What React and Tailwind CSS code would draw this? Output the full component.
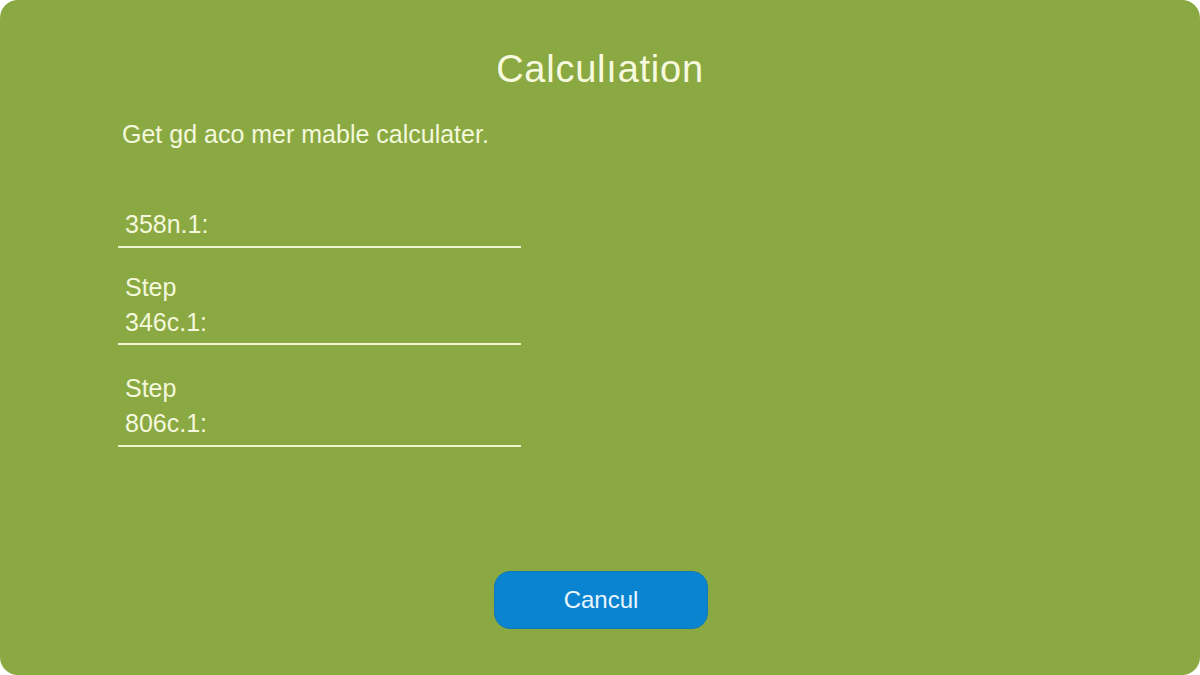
import React from 'react';

const Field = ({ lines, className = '' }) => (
  <div className={`w-[403px] border-b-2 border-[#eef5d0] ${className}`}>
    {lines.map((t, i) => (
      <p key={i} className="text-[25px] leading-[35px] text-[#f4f8dc] pl-[7px]">
        {t}
      </p>
    ))}
  </div>
);

const App = () => {
  return (
    <div className="w-[1200px] h-[675px] bg-white" style={{ fontFamily: '"Liberation Sans", Arial, sans-serif' }}>
      <div className="w-full h-full bg-[#8aa942] rounded-[18px] flex flex-col px-[118px]">
        <h1 className="pt-[47px] text-center text-[38px] leading-[44px] text-[#f7fadf] tracking-[0.02em]">
          Calculıation
        </h1>

        <p className="mt-[28px] pl-[4px] text-[25px] leading-[30px] text-[#f4f8dc]">
          Get gd aco mer mable calculater.
        </p>

        <Field lines={['358n.1:']} className="mt-[58px] pb-[4px]" />
        <Field lines={['Step', '346c.1:']} className="mt-[22px] pb-[3px]" />
        <Field lines={['Step', '806c.1:']} className="mt-[26px] pb-[4px]" />

        <div className="mt-auto pb-[46px] flex justify-center pl-[2px]">
          <button className="w-[214px] h-[58px] rounded-[16px] bg-[#0a84d0] border border-[#1278b8] text-[24px] text-[#eaf6ff]">
            Cancul
          </button>
        </div>
      </div>
    </div>
  );
};

export default App;
